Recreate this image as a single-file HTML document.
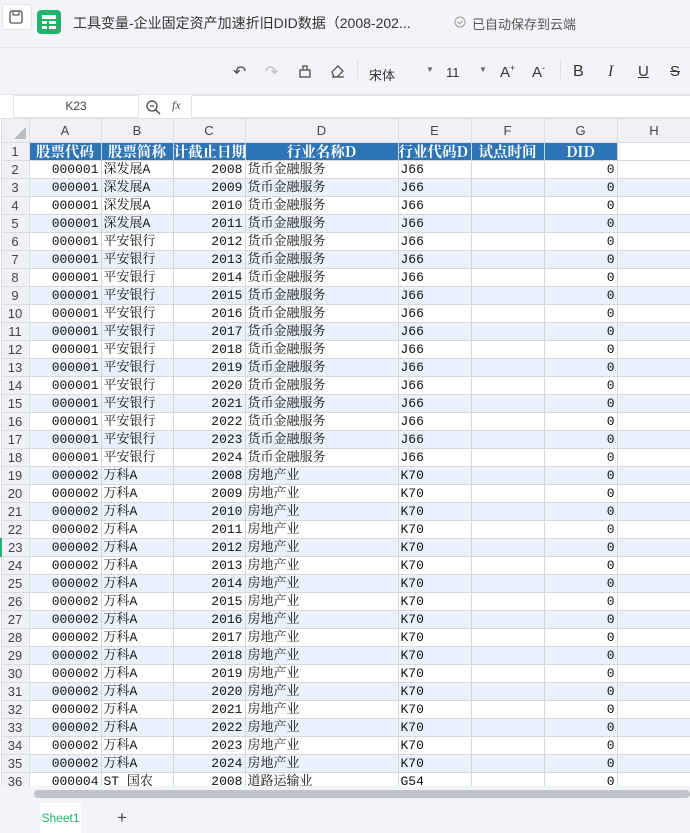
<!DOCTYPE html>
<html><head><meta charset="utf-8"><style>
*{margin:0;padding:0;box-sizing:border-box}
body{width:690px;height:833px;overflow:hidden;background:#f3f4f7;font-family:"Liberation Sans","Noto Sans CJK SC",sans-serif;position:relative}
.top{position:absolute;left:0;top:0;width:690px;height:48px;background:#f3f4f7;border-bottom:1px solid #e3e5ea}
.tb{position:absolute;left:0;top:48px;width:690px;height:47px;background:#f3f4f7;border-bottom:1px solid #e3e5ea}
.fb{position:absolute;left:0;top:95px;width:690px;height:23px;background:#fff}
.grid{position:absolute;left:0;top:118px;width:690px;height:668px;overflow:hidden;background:#fff}
table{width:690px;border-collapse:collapse;table-layout:fixed;font-family:"Liberation Mono","Noto Serif CJK SC",monospace;font-size:13px;color:#111}
td{height:18px;border:1px solid #d4d7dc;padding:1px 2px 0;white-space:nowrap;overflow:hidden;line-height:16px;vertical-align:middle}
tr.h td{height:24px;background:#eff1f4;color:#444;font-family:"Liberation Sans",sans-serif;text-align:center;font-size:13px;border-color:#d9dce1}
td.rn{background:#eff1f4;color:#444;font-family:"Liberation Sans",sans-serif;font-size:13px;text-align:center;padding:0;border-color:#d9dce1}
tr.hd td{background:#2e75b6;color:#fff;font-weight:bold;text-align:center;font-size:14.5px;font-family:"Noto Serif CJK SC","Noto Sans CJK SC",serif;padding:0}
tr.hd td.rn{background:#eff1f4;color:#444;font-weight:normal;font-family:"Liberation Sans",sans-serif;font-size:13px}
tr.o td{background:#e9f2fc}
tr.o td.rn{background:#eff1f4}
.r{text-align:right}
.sb{position:absolute;left:0;top:786px;width:690px;height:17px;background:#f3f4f7}
.tabs{position:absolute;left:0;top:803px;width:690px;height:30px;background:#f3f4f7}
</style></head><body>
<div class="top">
 <div style="position:absolute;left:2px;top:4px;width:30px;height:26px;background:#fff;border:1px solid #e1e3e8;border-radius:3px"></div>
 <svg style="position:absolute;left:9px;top:10px" width="14" height="14" viewBox="0 0 14 14"><rect x="1" y="1" width="12" height="12" rx="2" fill="none" stroke="#555" stroke-width="1.3"/><rect x="4" y="1" width="6" height="4" fill="none" stroke="#555" stroke-width="1.2"/></svg>
 <div style="position:absolute;left:37px;top:10px;width:24px;height:24px;background:#1fb36c;border-radius:4px"></div>
 <svg style="position:absolute;left:42px;top:15px" width="14" height="14"><rect x="0" y="0" width="14" height="4" fill="#fff"/><rect x="0" y="6" width="5" height="3" fill="#fff"/><rect x="7" y="6" width="7" height="3" fill="#fff"/><rect x="0" y="11" width="5" height="3" fill="#fff"/><rect x="7" y="11" width="7" height="3" fill="#fff"/></svg>
 <div style="position:absolute;left:73px;top:13px;font-size:14px;color:#333;font-family:'Liberation Sans','Noto Sans CJK SC',sans-serif">工具变量-企业固定资产加速折旧DID数据（2008-202...</div>
 <svg style="position:absolute;left:454px;top:16px" width="12" height="12"><circle cx="6" cy="6" r="5" fill="none" stroke="#999" stroke-width="1"/><path d="M3.5 6l2 2 3-3.5" fill="none" stroke="#999"/></svg>
 <div style="position:absolute;left:472px;top:14px;font-size:13px;color:#555">已自动保存到云端</div>
</div>
<div class="tb">
 <div style="position:absolute;left:233px;top:14px;font-size:16px;color:#444">↶</div>
 <div style="position:absolute;left:265px;top:14px;font-size:16px;color:#bbb">↷</div>
 <svg style="position:absolute;left:298px;top:16px" width="14" height="14"><path d="M2 13h10V6H2z M5 6V2h4v4" fill="none" stroke="#444" stroke-width="1.2"/></svg>
 <svg style="position:absolute;left:330px;top:16px" width="16" height="14"><path d="M2 8l6-6 5 5-6 6H4z M2 13h12" fill="none" stroke="#444" stroke-width="1.2"/></svg>
 <div style="position:absolute;left:357px;top:13px;width:1px;height:18px;background:#ddd"></div>
 <div style="position:absolute;left:369px;top:17px;font-size:13px;color:#333">宋体</div>
 <div style="position:absolute;left:426px;top:17px;font-size:8px;color:#666">▼</div>
 <div style="position:absolute;left:446px;top:17px;font-size:13px;color:#333">11</div>
 <div style="position:absolute;left:479px;top:17px;font-size:8px;color:#666">▼</div>
 <div style="position:absolute;left:500px;top:15px;font-size:15px;color:#333">A<sup style="font-size:9px">+</sup></div>
 <div style="position:absolute;left:532px;top:15px;font-size:15px;color:#333">A<sup style="font-size:9px">-</sup></div>
 <div style="position:absolute;left:560px;top:13px;width:1px;height:18px;background:#ddd"></div>
 <div style="position:absolute;left:573px;top:15px;font-size:16px;color:#333">B</div>
 <div style="position:absolute;left:608px;top:15px;font-size:16px;color:#333;font-style:italic;font-family:'Liberation Serif',serif">I</div>
 <div style="position:absolute;left:638px;top:15px;font-size:15px;color:#333;text-decoration:underline">U</div>
 <div style="position:absolute;left:670px;top:15px;font-size:15px;color:#333;text-decoration:line-through">S</div>
</div>
<div class="fb">
 <div style="position:absolute;left:13px;top:0;width:126px;height:23px;border:1px solid #e3e5ea;font-size:12px;color:#444;text-align:center;line-height:21px">K23</div>
 <svg style="position:absolute;left:145px;top:4px" width="16" height="16"><circle cx="7" cy="7" r="5" fill="none" stroke="#444" stroke-width="1.3"/><path d="M5 7h4M11 11l4 4" stroke="#444" stroke-width="1.3"/></svg>
 <div style="position:absolute;left:172px;top:3px;font-size:12px;color:#444;font-style:italic;font-family:'Liberation Serif',serif">fx</div>
 <div style="position:absolute;left:191px;top:0;width:499px;height:23px;border:1px solid #e3e5ea;border-right:none"></div>
</div>
<div class="grid">
<table>
<colgroup><col style="width:28px"><col style="width:72px"><col style="width:72px"><col style="width:72px"><col style="width:153px"><col style="width:73px"><col style="width:73px"><col style="width:73px"><col style="width:74px"></colgroup>
<tr class="h"><td class="rn" style="position:relative"><svg style="position:absolute;right:3px;bottom:3px" width="12" height="12"><path d="M12 0V12H0z" fill="#b8bcc3"/></svg></td><td>A</td><td>B</td><td>C</td><td>D</td><td>E</td><td>F</td><td>G</td><td>H</td></tr>
<tr class="hd"><td class="rn">1</td><td>股票代码</td><td>股票简称</td><td style="text-align:right;padding:0">计截止日期</td><td>行业名称D</td><td style="text-align:left;padding:0">行业代码D</td><td>试点时间</td><td>DID</td><td style="background:#fff"></td></tr>
<tr><td class="rn">2</td><td class="r">000001</td><td>深发展A</td><td class="r">2008</td><td>货币金融服务</td><td>J66</td><td></td><td class="r">0</td><td></td></tr>
<tr class="o"><td class="rn">3</td><td class="r">000001</td><td>深发展A</td><td class="r">2009</td><td>货币金融服务</td><td>J66</td><td></td><td class="r">0</td><td></td></tr>
<tr><td class="rn">4</td><td class="r">000001</td><td>深发展A</td><td class="r">2010</td><td>货币金融服务</td><td>J66</td><td></td><td class="r">0</td><td></td></tr>
<tr class="o"><td class="rn">5</td><td class="r">000001</td><td>深发展A</td><td class="r">2011</td><td>货币金融服务</td><td>J66</td><td></td><td class="r">0</td><td></td></tr>
<tr><td class="rn">6</td><td class="r">000001</td><td>平安银行</td><td class="r">2012</td><td>货币金融服务</td><td>J66</td><td></td><td class="r">0</td><td></td></tr>
<tr class="o"><td class="rn">7</td><td class="r">000001</td><td>平安银行</td><td class="r">2013</td><td>货币金融服务</td><td>J66</td><td></td><td class="r">0</td><td></td></tr>
<tr><td class="rn">8</td><td class="r">000001</td><td>平安银行</td><td class="r">2014</td><td>货币金融服务</td><td>J66</td><td></td><td class="r">0</td><td></td></tr>
<tr class="o"><td class="rn">9</td><td class="r">000001</td><td>平安银行</td><td class="r">2015</td><td>货币金融服务</td><td>J66</td><td></td><td class="r">0</td><td></td></tr>
<tr><td class="rn">10</td><td class="r">000001</td><td>平安银行</td><td class="r">2016</td><td>货币金融服务</td><td>J66</td><td></td><td class="r">0</td><td></td></tr>
<tr class="o"><td class="rn">11</td><td class="r">000001</td><td>平安银行</td><td class="r">2017</td><td>货币金融服务</td><td>J66</td><td></td><td class="r">0</td><td></td></tr>
<tr><td class="rn">12</td><td class="r">000001</td><td>平安银行</td><td class="r">2018</td><td>货币金融服务</td><td>J66</td><td></td><td class="r">0</td><td></td></tr>
<tr class="o"><td class="rn">13</td><td class="r">000001</td><td>平安银行</td><td class="r">2019</td><td>货币金融服务</td><td>J66</td><td></td><td class="r">0</td><td></td></tr>
<tr><td class="rn">14</td><td class="r">000001</td><td>平安银行</td><td class="r">2020</td><td>货币金融服务</td><td>J66</td><td></td><td class="r">0</td><td></td></tr>
<tr class="o"><td class="rn">15</td><td class="r">000001</td><td>平安银行</td><td class="r">2021</td><td>货币金融服务</td><td>J66</td><td></td><td class="r">0</td><td></td></tr>
<tr><td class="rn">16</td><td class="r">000001</td><td>平安银行</td><td class="r">2022</td><td>货币金融服务</td><td>J66</td><td></td><td class="r">0</td><td></td></tr>
<tr class="o"><td class="rn">17</td><td class="r">000001</td><td>平安银行</td><td class="r">2023</td><td>货币金融服务</td><td>J66</td><td></td><td class="r">0</td><td></td></tr>
<tr><td class="rn">18</td><td class="r">000001</td><td>平安银行</td><td class="r">2024</td><td>货币金融服务</td><td>J66</td><td></td><td class="r">0</td><td></td></tr>
<tr class="o"><td class="rn">19</td><td class="r">000002</td><td>万科A</td><td class="r">2008</td><td>房地产业</td><td>K70</td><td></td><td class="r">0</td><td></td></tr>
<tr><td class="rn">20</td><td class="r">000002</td><td>万科A</td><td class="r">2009</td><td>房地产业</td><td>K70</td><td></td><td class="r">0</td><td></td></tr>
<tr class="o"><td class="rn">21</td><td class="r">000002</td><td>万科A</td><td class="r">2010</td><td>房地产业</td><td>K70</td><td></td><td class="r">0</td><td></td></tr>
<tr><td class="rn">22</td><td class="r">000002</td><td>万科A</td><td class="r">2011</td><td>房地产业</td><td>K70</td><td></td><td class="r">0</td><td></td></tr>
<tr class="o"><td class="rn" style="border-left:2px solid #1fb36c">23</td><td class="r">000002</td><td>万科A</td><td class="r">2012</td><td>房地产业</td><td>K70</td><td></td><td class="r">0</td><td></td></tr>
<tr><td class="rn">24</td><td class="r">000002</td><td>万科A</td><td class="r">2013</td><td>房地产业</td><td>K70</td><td></td><td class="r">0</td><td></td></tr>
<tr class="o"><td class="rn">25</td><td class="r">000002</td><td>万科A</td><td class="r">2014</td><td>房地产业</td><td>K70</td><td></td><td class="r">0</td><td></td></tr>
<tr><td class="rn">26</td><td class="r">000002</td><td>万科A</td><td class="r">2015</td><td>房地产业</td><td>K70</td><td></td><td class="r">0</td><td></td></tr>
<tr class="o"><td class="rn">27</td><td class="r">000002</td><td>万科A</td><td class="r">2016</td><td>房地产业</td><td>K70</td><td></td><td class="r">0</td><td></td></tr>
<tr><td class="rn">28</td><td class="r">000002</td><td>万科A</td><td class="r">2017</td><td>房地产业</td><td>K70</td><td></td><td class="r">0</td><td></td></tr>
<tr class="o"><td class="rn">29</td><td class="r">000002</td><td>万科A</td><td class="r">2018</td><td>房地产业</td><td>K70</td><td></td><td class="r">0</td><td></td></tr>
<tr><td class="rn">30</td><td class="r">000002</td><td>万科A</td><td class="r">2019</td><td>房地产业</td><td>K70</td><td></td><td class="r">0</td><td></td></tr>
<tr class="o"><td class="rn">31</td><td class="r">000002</td><td>万科A</td><td class="r">2020</td><td>房地产业</td><td>K70</td><td></td><td class="r">0</td><td></td></tr>
<tr><td class="rn">32</td><td class="r">000002</td><td>万科A</td><td class="r">2021</td><td>房地产业</td><td>K70</td><td></td><td class="r">0</td><td></td></tr>
<tr class="o"><td class="rn">33</td><td class="r">000002</td><td>万科A</td><td class="r">2022</td><td>房地产业</td><td>K70</td><td></td><td class="r">0</td><td></td></tr>
<tr><td class="rn">34</td><td class="r">000002</td><td>万科A</td><td class="r">2023</td><td>房地产业</td><td>K70</td><td></td><td class="r">0</td><td></td></tr>
<tr class="o"><td class="rn">35</td><td class="r">000002</td><td>万科A</td><td class="r">2024</td><td>房地产业</td><td>K70</td><td></td><td class="r">0</td><td></td></tr>
<tr><td class="rn">36</td><td class="r">000004</td><td>ST 国农</td><td class="r">2008</td><td>道路运输业</td><td>G54</td><td></td><td class="r">0</td><td></td></tr>
</table>
</div>
<div class="sb"><div style="position:absolute;left:34px;top:4px;width:656px;height:8px;background:#bfc4cc;border-radius:4px"></div></div>
<div class="tabs">
 <div style="position:absolute;left:40px;top:0;width:41px;height:30px;background:#fff;color:#1fb36c;font-size:12px;text-align:center;line-height:30px">Sheet1</div>
 <div style="position:absolute;left:117px;top:5px;font-size:17px;color:#444">+</div>
</div>
</body></html>
